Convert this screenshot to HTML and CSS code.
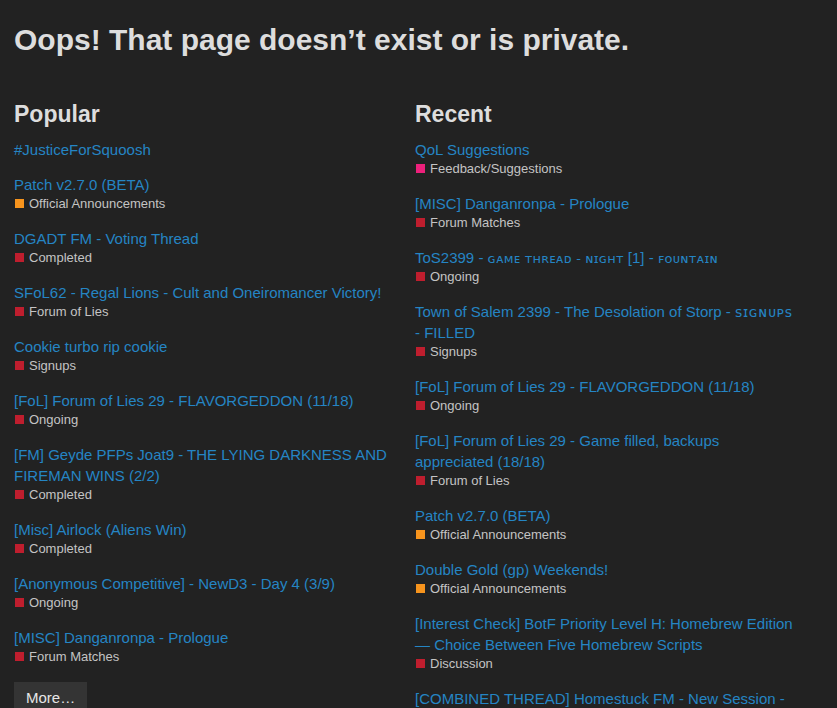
FILE: index.html
```html
<!DOCTYPE html>
<html lang="en">
<head>
<meta charset="utf-8">
<title>Page Not Found</title>
<link rel="stylesheet" href="styles.css">
</head>
<body>
<div class="page-not-found">
  <h1 class="title">Oops! That page doesn’t exist or is private.</h1>
  <div class="columns">
    <div class="column">
      <h2 class="col-title">Popular</h2>
      <div class="topic">
        <a class="topic-link" href="#">#JusticeForSquoosh</a>
      </div>
      <div class="topic">
        <a class="topic-link" href="#">Patch v2.7.0 (BETA)</a>
        <div class="cat"><span class="swatch orange"></span>Official Announcements</div>
      </div>
      <div class="topic">
        <a class="topic-link" href="#">DGADT FM - Voting Thread</a>
        <div class="cat"><span class="swatch red"></span>Completed</div>
      </div>
      <div class="topic">
        <a class="topic-link" href="#">SFoL62 - Regal Lions - Cult and Oneiromancer Victory!</a>
        <div class="cat"><span class="swatch red"></span>Forum of Lies</div>
      </div>
      <div class="topic">
        <a class="topic-link" href="#">Cookie turbo rip cookie</a>
        <div class="cat"><span class="swatch red"></span>Signups</div>
      </div>
      <div class="topic">
        <a class="topic-link" href="#">[FoL] Forum of Lies 29 - FLAVORGEDDON (11/18)</a>
        <div class="cat"><span class="swatch red"></span>Ongoing</div>
      </div>
      <div class="topic">
        <a class="topic-link" href="#">[FM] Geyde PFPs Joat9 - THE LYING DARKNESS AND FIREMAN WINS (2/2)</a>
        <div class="cat"><span class="swatch red"></span>Completed</div>
      </div>
      <div class="topic">
        <a class="topic-link" href="#">[Misc] Airlock (Aliens Win)</a>
        <div class="cat"><span class="swatch red"></span>Completed</div>
      </div>
      <div class="topic">
        <a class="topic-link" href="#">[Anonymous Competitive] - NewD3 - Day 4 (3/9)</a>
        <div class="cat"><span class="swatch red"></span>Ongoing</div>
      </div>
      <div class="topic">
        <a class="topic-link" href="#">[MISC] Danganronpa - Prologue</a>
        <div class="cat"><span class="swatch red"></span>Forum Matches</div>
      </div>
      <a class="more-btn" href="#">More…</a>
    </div>
    <div class="column">
      <h2 class="col-title">Recent</h2>
      <div class="topic">
        <a class="topic-link" href="#">QoL Suggestions</a>
        <div class="cat"><span class="swatch pink"></span>Feedback/Suggestions</div>
      </div>
      <div class="topic">
        <a class="topic-link" href="#">[MISC] Danganronpa - Prologue</a>
        <div class="cat"><span class="swatch red"></span>Forum Matches</div>
      </div>
      <div class="topic">
        <a class="topic-link" href="#">ToS2399 - <span class="sc">ɢᴀᴍᴇ ᴛʜʀᴇᴀᴅ - ɴɪɢʜᴛ</span> [1] - <span class="sc">ꜰᴏᴜɴᴛᴀɪɴ</span></a>
        <div class="cat"><span class="swatch red"></span>Ongoing</div>
      </div>
      <div class="topic">
        <a class="topic-link" href="#">Town of Salem 2399 - The Desolation of Storp - <span class="sc sc-wide">ꜱɪɢɴᴜᴘꜱ</span> - FILLED</a>
        <div class="cat"><span class="swatch red"></span>Signups</div>
      </div>
      <div class="topic">
        <a class="topic-link" href="#">[FoL] Forum of Lies 29 - FLAVORGEDDON (11/18)</a>
        <div class="cat"><span class="swatch red"></span>Ongoing</div>
      </div>
      <div class="topic">
        <a class="topic-link" href="#">[FoL] Forum of Lies 29 - Game filled, backups appreciated (18/18)</a>
        <div class="cat"><span class="swatch red"></span>Forum of Lies</div>
      </div>
      <div class="topic">
        <a class="topic-link" href="#">Patch v2.7.0 (BETA)</a>
        <div class="cat"><span class="swatch orange"></span>Official Announcements</div>
      </div>
      <div class="topic">
        <a class="topic-link" href="#">Double Gold (gp) Weekends!</a>
        <div class="cat"><span class="swatch orange"></span>Official Announcements</div>
      </div>
      <div class="topic">
        <a class="topic-link" href="#">[Interest Check] BotF Priority Level H: Homebrew Edition — Choice Between Five Homebrew Scripts</a>
        <div class="cat"><span class="swatch red"></span>Discussion</div>
      </div>
      <div class="topic">
        <a class="topic-link" href="#">[COMBINED THREAD] Homestuck FM - New Session - Game 2</a>
        <div class="cat"><span class="swatch red"></span>Ongoing</div>
      </div>
    </div>
  </div>
</div>
</body>
</html>
```

FILE: styles.css
```css
html, body {
  margin: 0;
  padding: 0;
  background: #222222;
}

body {
  font-family: "Liberation Sans", Arial, "DejaVu Sans", sans-serif;
  color: #dddddd;
  overflow: hidden;
}

.page-not-found {
  padding: 22px 14px 0 14px;
}

.title {
  margin: 0;
  font-size: 30px;
  line-height: 36px;
  font-weight: bold;
  color: #dddddd;
}

.columns {
  display: grid;
  grid-template-columns: 380px 380px;
  column-gap: 21px;
  margin-top: 42px;
}

.col-title {
  margin: 0 0 11px 0;
  font-size: 23px;
  line-height: 28px;
  font-weight: bold;
  color: #dddddd;
}

.topic {
  padding-bottom: 14px;
}

.topic-link {
  display: block;
  font-size: 15px;
  line-height: 21px;
  color: #2585c4;
  text-decoration: none;
}

.sc {
  font-family: "DejaVu Sans", sans-serif;
  font-size: 13px;
  letter-spacing: 0.2px;
  line-height: 1;
}

.sc-wide {
  font-size: 14px;
  letter-spacing: 0.7px;
}

.cat {
  display: flex;
  align-items: center;
  font-size: 13px;
  line-height: 17px;
  padding-bottom: 2px;
  color: #c4c4c4;
}

.swatch {
  display: inline-block;
  width: 9px;
  height: 9px;
  margin: 0 5px 0 1px;
}

.orange { background: #f7941d; }
.red { background: #bf1e2e; }
.pink { background: #ed207b; }

.more-btn {
  display: inline-block;
  margin-top: 1px;
  padding: 5px 12px 6px 12px;
  background: #343434;
  color: #e6e6e6;
  font-size: 15px;
  line-height: 21px;
  text-decoration: none;
}
```
